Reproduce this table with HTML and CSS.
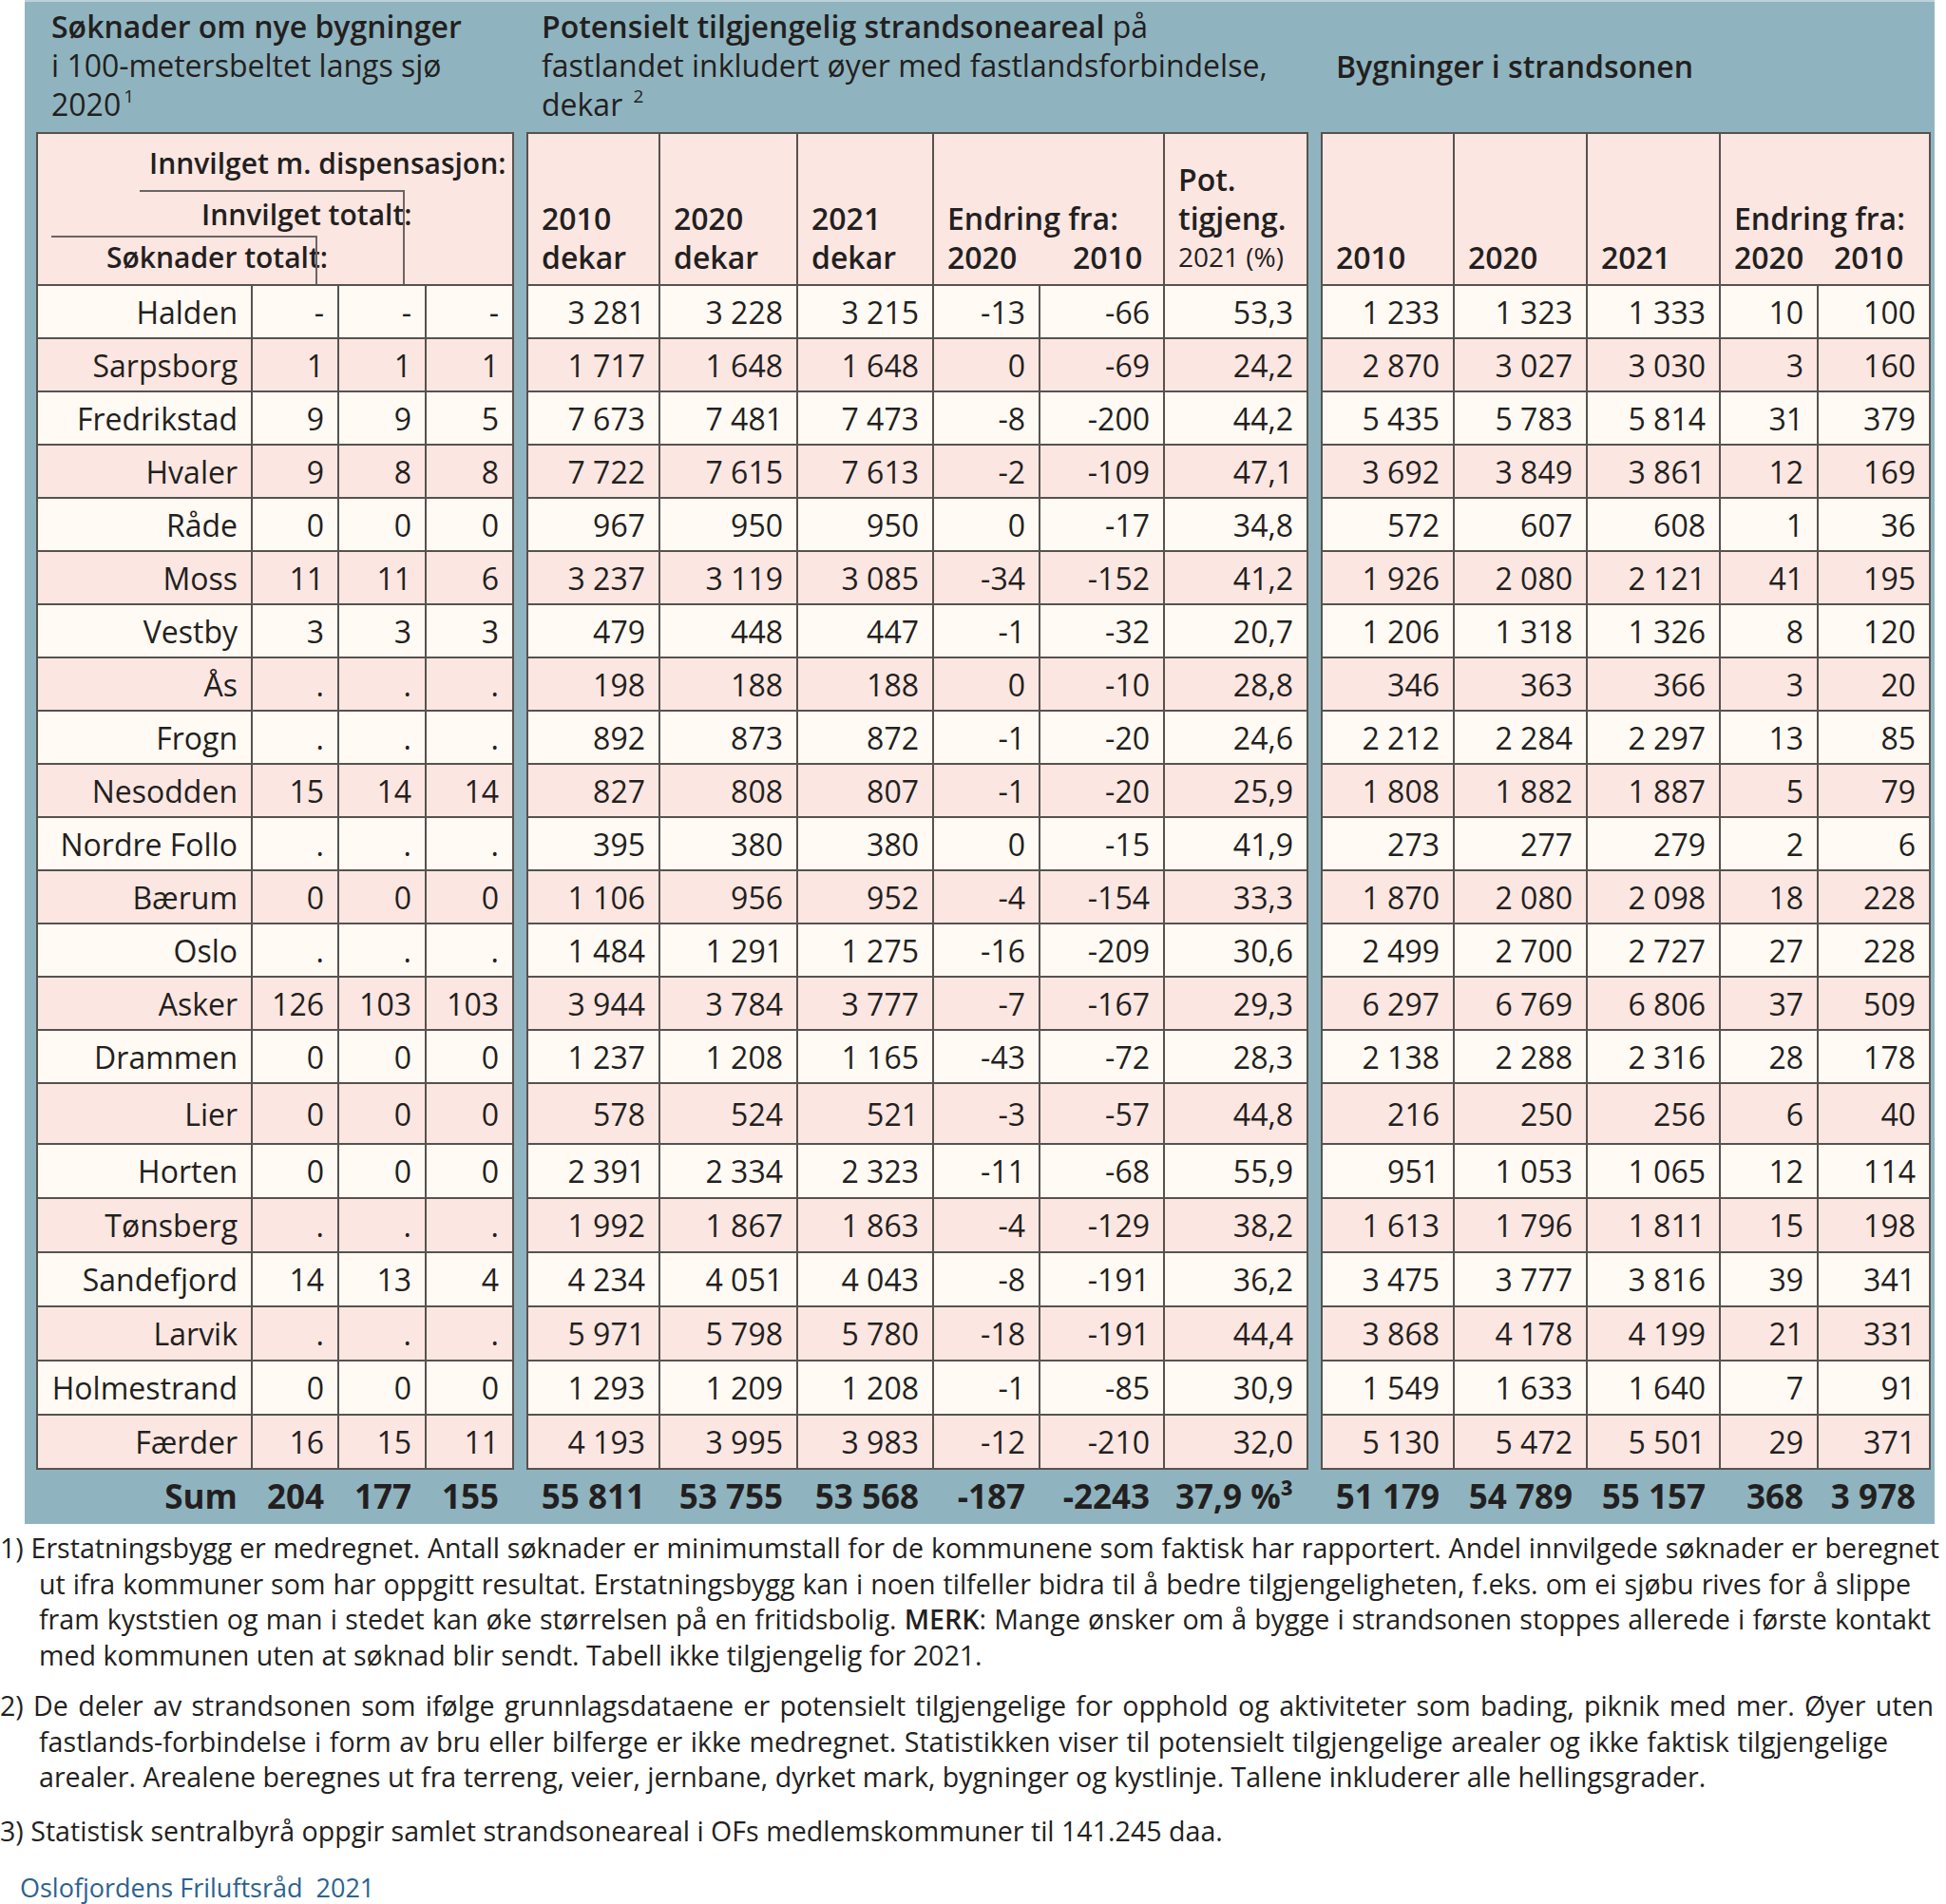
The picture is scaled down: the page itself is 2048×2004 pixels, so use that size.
FILE: index.html
```html
<!DOCTYPE html>
<html lang="no">
<head>
<meta charset="utf-8">
<title>Strandsonen</title>
<link rel="stylesheet" href="styles.css">
</head>
<body>
<div class="panel">
  <section class="block b1">
    <div class="title"><b>Søknader om nye bygninger</b><br>i 100-metersbeltet langs sjø<br>2020<sup>1</sup></div>
    <div class="grid g1">
      <div class="row hd">
        <span class="diag">
          <i class="l1">Innvilget m. dispensasjon:</i>
          <i class="l2">Innvilget totalt:</i>
          <i class="l3">Søknader totalt:</i>
          <em class="br br1"></em>
          <em class="br br2"></em>
        </span>
      </div>
      <div class="row"><span>Halden</span><span>-</span><span>-</span><span>-</span></div>
      <div class="row pk"><span>Sarpsborg</span><span>1</span><span>1</span><span>1</span></div>
      <div class="row"><span>Fredrikstad</span><span>9</span><span>9</span><span>5</span></div>
      <div class="row pk"><span>Hvaler</span><span>9</span><span>8</span><span>8</span></div>
      <div class="row"><span>Råde</span><span>0</span><span>0</span><span>0</span></div>
      <div class="row pk"><span>Moss</span><span>11</span><span>11</span><span>6</span></div>
      <div class="row"><span>Vestby</span><span>3</span><span>3</span><span>3</span></div>
      <div class="row pk"><span>Ås</span><span>.</span><span>.</span><span>.</span></div>
      <div class="row"><span>Frogn</span><span>.</span><span>.</span><span>.</span></div>
      <div class="row pk"><span>Nesodden</span><span>15</span><span>14</span><span>14</span></div>
      <div class="row"><span>Nordre Follo</span><span>.</span><span>.</span><span>.</span></div>
      <div class="row pk"><span>Bærum</span><span>0</span><span>0</span><span>0</span></div>
      <div class="row"><span>Oslo</span><span>.</span><span>.</span><span>.</span></div>
      <div class="row pk"><span>Asker</span><span>126</span><span>103</span><span>103</span></div>
      <div class="row"><span>Drammen</span><span>0</span><span>0</span><span>0</span></div>
      <div class="row pk"><span>Lier</span><span>0</span><span>0</span><span>0</span></div>
      <div class="row"><span>Horten</span><span>0</span><span>0</span><span>0</span></div>
      <div class="row pk"><span>Tønsberg</span><span>.</span><span>.</span><span>.</span></div>
      <div class="row"><span>Sandefjord</span><span>14</span><span>13</span><span>4</span></div>
      <div class="row pk"><span>Larvik</span><span>.</span><span>.</span><span>.</span></div>
      <div class="row"><span>Holmestrand</span><span>0</span><span>0</span><span>0</span></div>
      <div class="row pk"><span>Færder</span><span>16</span><span>15</span><span>11</span></div>
      <div class="row sum"><span>Sum</span><span>204</span><span>177</span><span>155</span></div>
    </div>
  </section>

  <section class="block b2">
    <div class="title"><b>Potensielt tilgjengelig strandsoneareal</b> på<br>fastlandet inkludert øyer med fastlandsforbindelse,<br>dekar <sup>2</sup></div>
    <div class="grid g2">
      <div class="row hd">
        <span>2010<br>dekar</span>
        <span>2020<br>dekar</span>
        <span>2021<br>dekar</span>
        <span class="end end2">Endring fra:<b class="yrs"><i>2020</i>2010</b></span>
        <span>Pot.<br>tigjeng.<br><small>2021 (%)</small></span>
      </div>
      <div class="row"><span>3 281</span><span>3 228</span><span>3 215</span><span>-13</span><span>-66</span><span>53,3</span></div>
      <div class="row pk"><span>1 717</span><span>1 648</span><span>1 648</span><span>0</span><span>-69</span><span>24,2</span></div>
      <div class="row"><span>7 673</span><span>7 481</span><span>7 473</span><span>-8</span><span>-200</span><span>44,2</span></div>
      <div class="row pk"><span>7 722</span><span>7 615</span><span>7 613</span><span>-2</span><span>-109</span><span>47,1</span></div>
      <div class="row"><span>967</span><span>950</span><span>950</span><span>0</span><span>-17</span><span>34,8</span></div>
      <div class="row pk"><span>3 237</span><span>3 119</span><span>3 085</span><span>-34</span><span>-152</span><span>41,2</span></div>
      <div class="row"><span>479</span><span>448</span><span>447</span><span>-1</span><span>-32</span><span>20,7</span></div>
      <div class="row pk"><span>198</span><span>188</span><span>188</span><span>0</span><span>-10</span><span>28,8</span></div>
      <div class="row"><span>892</span><span>873</span><span>872</span><span>-1</span><span>-20</span><span>24,6</span></div>
      <div class="row pk"><span>827</span><span>808</span><span>807</span><span>-1</span><span>-20</span><span>25,9</span></div>
      <div class="row"><span>395</span><span>380</span><span>380</span><span>0</span><span>-15</span><span>41,9</span></div>
      <div class="row pk"><span>1 106</span><span>956</span><span>952</span><span>-4</span><span>-154</span><span>33,3</span></div>
      <div class="row"><span>1 484</span><span>1 291</span><span>1 275</span><span>-16</span><span>-209</span><span>30,6</span></div>
      <div class="row pk"><span>3 944</span><span>3 784</span><span>3 777</span><span>-7</span><span>-167</span><span>29,3</span></div>
      <div class="row"><span>1 237</span><span>1 208</span><span>1 165</span><span>-43</span><span>-72</span><span>28,3</span></div>
      <div class="row pk"><span>578</span><span>524</span><span>521</span><span>-3</span><span>-57</span><span>44,8</span></div>
      <div class="row"><span>2 391</span><span>2 334</span><span>2 323</span><span>-11</span><span>-68</span><span>55,9</span></div>
      <div class="row pk"><span>1 992</span><span>1 867</span><span>1 863</span><span>-4</span><span>-129</span><span>38,2</span></div>
      <div class="row"><span>4 234</span><span>4 051</span><span>4 043</span><span>-8</span><span>-191</span><span>36,2</span></div>
      <div class="row pk"><span>5 971</span><span>5 798</span><span>5 780</span><span>-18</span><span>-191</span><span>44,4</span></div>
      <div class="row"><span>1 293</span><span>1 209</span><span>1 208</span><span>-1</span><span>-85</span><span>30,9</span></div>
      <div class="row pk"><span>4 193</span><span>3 995</span><span>3 983</span><span>-12</span><span>-210</span><span>32,0</span></div>
      <div class="row sum"><span>55 811</span><span>53 755</span><span>53 568</span><span>-187</span><span>-2243</span><span>37,9 %³</span></div>
    </div>
  </section>

  <section class="block b3">
    <div class="title"><b>Bygninger i strandsonen</b></div>
    <div class="grid g3">
      <div class="row hd">
        <span>2010</span>
        <span>2020</span>
        <span>2021</span>
        <span class="end end3">Endring fra:<b class="yrs"><i>2020</i>2010</b></span>
      </div>
      <div class="row"><span>1 233</span><span>1 323</span><span>1 333</span><span>10</span><span>100</span></div>
      <div class="row pk"><span>2 870</span><span>3 027</span><span>3 030</span><span>3</span><span>160</span></div>
      <div class="row"><span>5 435</span><span>5 783</span><span>5 814</span><span>31</span><span>379</span></div>
      <div class="row pk"><span>3 692</span><span>3 849</span><span>3 861</span><span>12</span><span>169</span></div>
      <div class="row"><span>572</span><span>607</span><span>608</span><span>1</span><span>36</span></div>
      <div class="row pk"><span>1 926</span><span>2 080</span><span>2 121</span><span>41</span><span>195</span></div>
      <div class="row"><span>1 206</span><span>1 318</span><span>1 326</span><span>8</span><span>120</span></div>
      <div class="row pk"><span>346</span><span>363</span><span>366</span><span>3</span><span>20</span></div>
      <div class="row"><span>2 212</span><span>2 284</span><span>2 297</span><span>13</span><span>85</span></div>
      <div class="row pk"><span>1 808</span><span>1 882</span><span>1 887</span><span>5</span><span>79</span></div>
      <div class="row"><span>273</span><span>277</span><span>279</span><span>2</span><span>6</span></div>
      <div class="row pk"><span>1 870</span><span>2 080</span><span>2 098</span><span>18</span><span>228</span></div>
      <div class="row"><span>2 499</span><span>2 700</span><span>2 727</span><span>27</span><span>228</span></div>
      <div class="row pk"><span>6 297</span><span>6 769</span><span>6 806</span><span>37</span><span>509</span></div>
      <div class="row"><span>2 138</span><span>2 288</span><span>2 316</span><span>28</span><span>178</span></div>
      <div class="row pk"><span>216</span><span>250</span><span>256</span><span>6</span><span>40</span></div>
      <div class="row"><span>951</span><span>1 053</span><span>1 065</span><span>12</span><span>114</span></div>
      <div class="row pk"><span>1 613</span><span>1 796</span><span>1 811</span><span>15</span><span>198</span></div>
      <div class="row"><span>3 475</span><span>3 777</span><span>3 816</span><span>39</span><span>341</span></div>
      <div class="row pk"><span>3 868</span><span>4 178</span><span>4 199</span><span>21</span><span>331</span></div>
      <div class="row"><span>1 549</span><span>1 633</span><span>1 640</span><span>7</span><span>91</span></div>
      <div class="row pk"><span>5 130</span><span>5 472</span><span>5 501</span><span>29</span><span>371</span></div>
      <div class="row sum"><span>51 179</span><span>54 789</span><span>55 157</span><span>368</span><span>3 978</span></div>
    </div>
  </section>
</div>

<div class="notes">
  <p class="note">
    <span class="j w1">1) Erstatningsbygg er medregnet. Antall søknader er minimumstall for de kommunene som faktisk har rapportert. Andel innvilgede søknader er beregnet</span>
    <span class="j w2">ut ifra kommuner som har oppgitt resultat. Erstatningsbygg kan i noen tilfeller bidra til å bedre tilgjengeligheten, f.eks. om ei sjøbu rives for å slippe</span>
    <span class="j w3">fram kyststien og man i stedet kan øke størrelsen på en fritidsbolig. <b>MERK</b>: Mange ønsker om å bygge i strandsonen stoppes allerede i første kontakt</span>
    <span>med kommunen uten at søknad blir sendt. Tabell ikke tilgjengelig for 2021.</span>
  </p>
  <p class="note">
    <span class="j w4">2) De deler av strandsonen som ifølge grunnlagsdataene er potensielt tilgjengelige for opphold og aktiviteter som bading, piknik med mer. Øyer uten</span>
    <span class="j w5">fastlands-forbindelse i form av bru eller bilferge er ikke medregnet. Statistikken viser til potensielt tilgjengelige arealer og ikke faktisk tilgjengelige</span>
    <span>arealer. Arealene beregnes ut fra terreng, veier, jernbane, dyrket mark, bygninger og kystlinje. Tallene inkluderer alle hellingsgrader.</span>
  </p>
  <p class="note n3">
    <span>3) Statistisk sentralbyrå oppgir samlet strandsoneareal i OFs medlemskommuner til 141.245 daa.</span>
  </p>
  <p class="credit">Oslofjordens Friluftsråd&nbsp; 2021</p>
</div>
</body>
</html>
```

FILE: styles.css
```css
html, body {
  margin: 0;
  padding: 0;
  background: #ffffff;
}

body {
  width: 2048px;
  font-family: "Open Sans", "Noto Sans", "Liberation Sans", sans-serif;
  color: #231f20;
}

.panel {
  margin-left: 26px;
  width: 2010px;
  box-sizing: border-box;
  padding: 0 4px 0 12px;
  display: flex;
  gap: 13px;
  background: linear-gradient(#bcd2d9 0 2px, #8fb4bf 2px);
}

.block {
  display: flex;
  flex-direction: column;
}

.b1 { width: 503px; }
.b2 { width: 823px; }
.b3 { width: 642px; }

.title {
  height: 139px;
  box-sizing: border-box;
  padding: 7px 0 0 16px;
  font-size: 32px;
  line-height: 41px;
  white-space: nowrap;
}

.title b { font-weight: 600; }

.title sup {
  font-size: 19px;
  line-height: 0;
  vertical-align: 14px;
  margin-left: 3px;
}

.b3 .title {
  display: flex;
  align-items: center;
  padding-top: 0;
}

.grid {
  display: grid;
  grid-template-rows: 162px repeat(15, 56px) 64px repeat(6, 57px) 57px;
}

.g1 { grid-template-columns: 228px 91px 92px 92px; }
.g2 { grid-template-columns: 141px 145px 143px 112px 131px 151px; }
.g3 { grid-template-columns: 141px 140px 140px 103px 118px; }

.row { display: contents; }

.row > span {
  display: flex;
  align-items: center;
  justify-content: flex-end;
  box-sizing: border-box;
  padding-right: 14px;
  font-size: 32px;
  line-height: 41px;
  white-space: nowrap;
  background: #fffaf3;
  border-right: 2px solid #57524f;
  border-bottom: 2px solid #57524f;
}

.row > span:first-child { border-left: 2px solid #57524f; }

.row.pk > span { background: #fce6e1; }

.row.hd > span {
  background: #fce6e1;
  border-top: 2px solid #57524f;
  flex-direction: column;
  justify-content: flex-end;
  align-items: flex-start;
  padding: 0 0 8px 14px;
  font-weight: 600;
}

.hd small {
  font-size: 28px;
  font-weight: 400;
}

.hd .end { grid-column: span 2; }
.hd .yrs { display: block; font-weight: 600; }
.hd .yrs i { font-style: normal; display: inline-block; }
.end2 .yrs i { width: 132px; }
.end3 .yrs i { width: 105px; }

/* header of first table with the bracket lines */
.row.hd > .diag {
  grid-column: 1 / -1;
  position: relative;
  display: block;
  padding: 0;
  font-size: 30px;
}

.diag i {
  display: block;
  font-style: normal;
  white-space: nowrap;
}

.diag .l1 { margin: 10px 0 0 117px; }
.diag .l2 { margin: 13px 0 0 172px; }
.diag .l3 { margin: 4px 0 0 72px; }

.diag .br {
  position: absolute;
  border-top: 2px solid #6b6563;
  border-right: 2px solid #6b6563;
  box-sizing: border-box;
}

.diag .br1 { left: 107px; top: 59px; width: 279px; height: 99px; }
.diag .br2 { left: 14px; top: 107px; width: 280px; height: 51px; }

/* sum row */
.row.sum > span {
  background: transparent;
  border-color: transparent;
  font-weight: 700;
  font-size: 35px;
}

/* footnotes */
.notes {
  margin-top: 6px;
  font-size: 28.6px;
  line-height: 37.5px;
}

.note {
  margin: 0 0 16px 0;
  white-space: nowrap;
}

.note.n3 { margin-top: 19px; }

.note span {
  display: block;
  margin-left: 41px;
}

.note span:first-child { margin-left: 0; }

.note .j {
  text-align: justify;
  text-align-last: justify;
  white-space: normal;
}

.note .w1 { width: 2041px; }
.note .w2 { width: 1970px; }
.note .w3 { width: 1991px; }
.note .w4 { width: 2035px; }
.note .w5 { width: 1946px; }

.note b { font-weight: 600; }

.credit {
  margin: 23px 0 0 21px;
  font-size: 27px;
  color: #2c6291;
}
```
